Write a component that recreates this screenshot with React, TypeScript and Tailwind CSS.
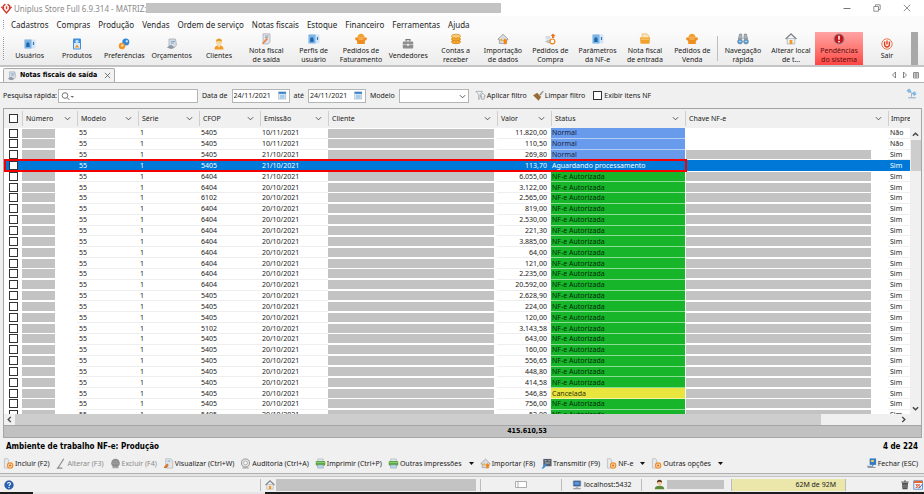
import type { ReactNode } from "react";
import clsx from "clsx";

type IconName =
  | "users"
  | "product"
  | "prefs"
  | "budget"
  | "client"
  | "note"
  | "basket"
  | "briefcase"
  | "coins"
  | "homeUp"
  | "purchase"
  | "folder"
  | "binoculars"
  | "home"
  | "alert"
  | "power"
  | "filter"
  | "broom"
  | "calendar"
  | "add"
  | "pencil"
  | "remove"
  | "view"
  | "audit"
  | "printer"
  | "transmit"
  | "close"
  | "satellite"
  | "help"
  | "computer"
  | "person"
  | "trash"
  | "agenda"
  | "logo";

const ICONS: Record<IconName, ReactNode> = {
  logo: (
    <g fill="none" stroke="#d9362f" strokeWidth="1.6">
      <path d="M4.800 1 2.600 3.200v3.600L6 10.800l3.400-4V3.200L7.200 1.400" />
      <path d="M6 3.600v3.200" strokeWidth="1.500" />
      <path d="M.4 4.200 2.400 6M11.600 4.200 9.600 6" />
    </g>
  ),
  users: (
    <g>
      <rect x="0.500" y="1.500" width="11" height="9" rx="0.800" fill="#d3e6f7" />
      <rect x="0.500" y="1.500" width="7" height="9" fill="#7db4e4" />
      <path d="M2.200 9V6a1.700 1.700 0 0 1 3.400 0v3z" fill="#1f66ae" />
      <path d="M9.500 4v3" stroke="#3c78b4" strokeWidth="1.200" />
    </g>
  ),
  product: (
    <g>
      <rect x="2" y="0.5" width="8" height="11" rx="1" fill="#3f8fdc" />
      <rect x="3" y="5" width="6" height="5.5" fill="#d9ecfb" />
      <circle cx="6" cy="3.400" r="1.700" fill="#bfe0f8" />
      <path d="M3.600 9.600 6 6.400l2.400 3.200z" fill="#f0942a" />
    </g>
  ),
  prefs: (
    <g>
      <circle cx="7.8" cy="4" r="3.5" fill="#2f86dc" />
      <circle cx="8.8" cy="3.2" r="1.2" fill="#b8dcf7" />
      <circle cx="4" cy="8" r="3.2" fill="#f39325" />
      <circle cx="4.2" cy="7.4" r="1.200" fill="#fde3bd" />
    </g>
  ),
  budget: (
    <g>
      <path d="M3 1h6.5l1 6L8 10H3z" fill="#d8dde2" stroke="#929aa3" strokeWidth="0.6" />
      <path d="M5 3.4h4M5 5h3" stroke="#5b9bd5" strokeWidth="0.8" />
      <path d="M0.8 9.4 5 6.8l3.4 2.4-3 1.8z" fill="#8d98a4" />
    </g>
  ),
  client: (
    <g>
      <path d="M1.4 11.4c0-3 2-4.2 4.6-4.2s4.6 1.200 4.600 4.200z" fill="#f39c24" />
      <path d="M4.800 7.400 6 9.600l1.200-2.200z" fill="#fff" />
      <circle cx="6" cy="4" r="3" fill="#f8d7a4" />
      <path d="M3 3.800C3 1.600 4.400.6 6 .6s3 1 3 3.200C7.600 3 5 2.600 3 3.800z" fill="#e4a023" />
    </g>
  ),
  note: (
    <g>
      <path d="M3 .8h7v8.400L8 11H3z" fill="#dfe2e6" stroke="#9aa0a8" strokeWidth="0.6" />
      <path d="M5 3h3.500M5 4.600h3" stroke="#7d8894" strokeWidth="0.7" />
      <path d="M2 10.500 6.500 5l1.400 1.200-4.600 4.800z" fill="#e8823a" />
    </g>
  ),
  basket: (
    <g>
      <path d="M2.200 4.600C3 1.800 4.500.8 6 .8s3 1 3.800 3.800z" fill="#f2a02c" />
      <path d="M.2 4.400h11.600v2L9.800 8v3H2.200V8L.2 6.400z" fill="#ef8d1f" />
      <path d="M3.400 6h5.200" stroke="#fbd08b" strokeWidth="0.900" />
    </g>
  ),
  briefcase: (
    <g>
      <path d="M4 3.600V1.600h4v2" fill="none" stroke="#777" strokeWidth="1.1" />
      <rect x="0.800" y="3.600" width="10.400" height="7" rx="0.800" fill="#8e8e8e" />
      <path d="M.8 6.600h10.400" stroke="#c9c9c9" strokeWidth="0.900" />
      <rect x="5" y="5.800" width="2" height="2" fill="#e7e7e7" />
    </g>
  ),
  coins: (
    <g fill="#f4a62a" stroke="#c6751a" strokeWidth="0.600">
      <ellipse cx="6" cy="8.800" rx="4.600" ry="2" />
      <ellipse cx="6" cy="6" rx="4.600" ry="2" />
      <ellipse cx="6" cy="3.200" rx="4.600" ry="2" fill="#fbcf6c" />
    </g>
  ),
  homeUp: (
    <g>
      <path d="M1 6 6 1.200 11 6v.6H9.600V10.500H2.400V6.600H1z" fill="#dadde0" stroke="#8b9096" strokeWidth="0.700" />
      <path d="M8 5.400 10.800 8.300H9.400v3H6.800v-3H5.400z" fill="#f08519" />
      <circle cx="4.400" cy="7" r="1.300" fill="#f3b13a" />
    </g>
  ),
  purchase: (
    <g>
      <path d="M.8 8.500 5 6.500l3 2-3 2z" fill="#b9c0c8" />
      <path d="M1.500 3h5v3.500h-5z" fill="#d8dde2" />
      <path d="M9 .6 11.600 3H10.200v2H8V3H6.600z" fill="#e8742c" />
      <circle cx="8.400" cy="8.400" r="2.400" fill="#fff" stroke="#f08519" strokeWidth="1.200" />
    </g>
  ),
  folder: (
    <g>
      <path d="M3 .8h5l2 2v4H3z" fill="#fbe3b4" stroke="#dba24c" strokeWidth="0.500" />
      <path d="M.8 4.600h10.400l-.8 6.200H1.600z" fill="#f2a02c" />
      <path d="M1.500 6.200h9" stroke="#fbd08b" strokeWidth="0.900" />
    </g>
  ),
  binoculars: (
    <g>
      <path d="M2.600 1h2l.6 5H1.400zM7.400 1h2l1.200 5H6.800z" fill="#aeb5bd" stroke="#6e7883" strokeWidth="0.600" />
      <circle cx="3" cy="8.600" r="2.400" fill="#4f9de0" stroke="#777f88" strokeWidth="0.700" />
      <circle cx="9" cy="8.600" r="2.400" fill="#4f9de0" stroke="#777f88" strokeWidth="0.700" />
      <path d="M1.800 8.400h2.400M7.800 8.400h2.400" stroke="#cfe8fb" strokeWidth="0.900" />
    </g>
  ),
  home: (
    <g>
      <path d="M2.200 5.500h7.600v5.500H2.200z" fill="#eceef0" stroke="#9a9fa5" strokeWidth="0.600" />
      <path d="M.6 6 6 1l5.400 5" fill="none" stroke="#7f868e" strokeWidth="1.300" />
      <path d="M4.600 11V7h2.800v4z" fill="#f39a1f" />
    </g>
  ),
  alert: (
    <g>
      <circle cx="6" cy="6" r="5" fill="#c5161d" stroke="#8d8d8d" strokeWidth="0.900" />
      <path d="M6 2.800v3.900" stroke="#fff" strokeWidth="1.500" />
      <circle cx="6" cy="8.600" r="0.900" fill="#fff" />
    </g>
  ),
  power: (
    <g fill="none" stroke="#e2401f" strokeWidth="1.400">
      <circle cx="6" cy="6" r="5.200" stroke="#ea7a55" strokeWidth="1" />
      <path d="M3.600 3.400v3.200a2.400 2.400 0 0 0 4.800 0V3.400M6 2.400v4" />
    </g>
  ),
  filter: (
    <g>
      <path d="M1 1.500h7L5.600 5v4L4 10.400V5z" fill="#eef1f3" stroke="#8d959d" strokeWidth="0.700" />
      <path d="M8.600 3.500 11.400 6.600H10V10H7.200V6.600H6z" fill="#f4f6f8" stroke="#7d868f" strokeWidth="0.700" />
    </g>
  ),
  broom: (
    <g>
      <path d="M7 5 10.800.8l.8.8L8.200 6z" fill="#8a8a8a" />
      <path d="M4.600 3 9 7.600 6 11.600 0 5.600z" fill="#a9793d" />
      <path d="M1.800 5.600 6.400 10M3.400 4.400l4.200 4" stroke="#5a4330" strokeWidth="0.700" />
    </g>
  ),
  calendar: (
    <g>
      <rect x="1" y="1.200" width="9.500" height="9.500" fill="#d9e9f7" stroke="#8ba0b5" strokeWidth="0.600" />
      <path d="M1 1.200h9.500v2.600H1z" fill="#3b82c8" />
      <path d="M2.600 5.800h6.200M2.600 7.500h6.200M2.600 9.200h6.200" stroke="#6fa3d2" strokeWidth="0.700" />
    </g>
  ),
  add: (
    <g>
      <path d="M1.500 .8h3.500l1.200 1.400V11H1.500z" fill="#e6e9ec" stroke="#a3a8ae" strokeWidth="0.600" />
      <circle cx="7.800" cy="8.200" r="2.900" fill="#fbe0bf" stroke="#ee8d2b" strokeWidth="1.200" />
      <path d="M7.800 6.800v2.800M6.400 8.200h2.800" stroke="#d8670f" strokeWidth="0.900" />
    </g>
  ),
  pencil: <path d="M8.500.8 3 9.500 1.800 11H7" fill="none" stroke="#8d8d8d" strokeWidth="1.300" />,
  remove: (
    <g>
      <circle cx="6" cy="5.600" r="4.700" fill="#8f8f8f" />
      <path d="M2.600 9.600h6.800v1.600H2.600z" fill="#a9a9a9" />
      <path d="M3 4h6M2.400 6h7.200" stroke="#a6a6a6" strokeWidth="0.600" />
    </g>
  ),
  view: (
    <g>
      <path d="M3 .8h5.400l2.200 2V11H3z" fill="#e3e6e9" stroke="#9da3aa" strokeWidth="0.600" />
      <path d="M1 9.800 4.500 6l1.800 1.600L4 11H1z" fill="#d7732f" />
      <path d="M5 3.400h3" stroke="#5b9bd5" strokeWidth="0.900" />
    </g>
  ),
  audit: (
    <g>
      <circle cx="6" cy="5.400" r="4.400" fill="#e2e2e2" stroke="#8d8d8d" strokeWidth="0.900" />
      <circle cx="6" cy="5.400" r="2" fill="#fff" stroke="#9b9b9b" strokeWidth="0.800" />
      <path d="M2.600 10.800h6.800" stroke="#8d8d8d" strokeWidth="1" />
    </g>
  ),
  printer: (
    <g>
      <path d="M3 1h6v3H3z" fill="#dfe6ea" stroke="#94a0a8" strokeWidth="0.500" />
      <rect x="0.800" y="3.400" width="10.400" height="5" rx="1.200" fill="#5aa544" />
      <path d="M1.500 5h9" stroke="#9dd58a" strokeWidth="0.900" />
      <path d="M2.800 7.500h6.400v3.500H2.800z" fill="#b9d5e8" stroke="#7f98a8" strokeWidth="0.500" />
    </g>
  ),
  transmit: (
    <g>
      <rect x="2.500" y="1" width="9" height="8" fill="#55606b" />
      <path d="M4 3h2M8 3h2M4.500 5.500h5" stroke="#c5ccd3" strokeWidth="0.900" />
      <path d="M.4 11.400 4.500 6.400l1.800 1.300L3 11.400z" fill="#3f8fdc" />
    </g>
  ),
  close: (
    <g>
      <rect x="4" y="0.500" width="7" height="7" fill="#3479c6" />
      <path d="M5.600 2.200h3v2.200h-3z" fill="#f6d04a" />
      <path d="M1 8.500h5l2 1.400h2.500V11H2z" fill="#8f9aa5" />
      <path d="M7.400 7v2.400" stroke="#3479c6" strokeWidth="1.200" />
    </g>
  ),
  satellite: (
    <g>
      <path d="m.6 2.400 3-1.800 2.400 3-3 2.200z" fill="#7fbaea" />
      <path d="m6.600 5.400 3-1.800 2 3.200-3 1.800z" fill="#7fbaea" />
      <path d="m4 4 4.500 3M6 6v3.500" stroke="#9aa7b3" strokeWidth="1" />
      <path d="M2.500 10.600h8" stroke="#a9bccf" strokeWidth="1.600" />
    </g>
  ),
  help: (
    <g>
      <circle cx="6" cy="6" r="5.200" fill="#2a62b8" stroke="#17407f" strokeWidth="0.600" />
      <path d="M4.200 4.600C4.300 2.500 7.800 2.600 7.700 4.600 7.600 5.800 6 5.900 6 7.200" fill="none" stroke="#fff" strokeWidth="1.300" />
      <circle cx="6" cy="9" r="0.800" fill="#fff" />
    </g>
  ),
  computer: (
    <g>
      <rect x="1.500" y="1" width="9" height="6.500" rx="0.600" fill="#315f9c" stroke="#8d98a4" strokeWidth="0.700" />
      <path d="M3 2.400h6v3.400H3z" fill="#5c97dc" />
      <path d="M4.500 8h3v1.400h-3zM1.500 9.600h9v1.400h-9z" fill="#9aa3ad" />
    </g>
  ),
  person: (
    <g>
      <path d="M.8 11.200C.8 8.400 3 7.400 6 7.400s5.200 1 5.200 3.800z" fill="#5c8a34" />
      <circle cx="6" cy="4.200" r="2.700" fill="#f0c89a" />
      <path d="M3.200 4C3 1.800 4.400.8 6 .8s3 1 2.800 3.200C7.600 2.800 4.800 2.600 3.200 4z" fill="#5b3a1c" />
    </g>
  ),
  trash: (
    <g>
      <path d="M2.400 3.600h7.200L9 11.200H3z" fill="#4d4d4d" />
      <path d="M1.600 2.500h8.800M4.800 1.300h2.400" stroke="#4d4d4d" strokeWidth="1.200" />
      <path d="M4.800 5v4.800M7.200 5v4.800" stroke="#bbb" strokeWidth="0.700" />
    </g>
  ),
  agenda: (
    <g>
      <rect x="1" y="1" width="10.500" height="10" fill="#f3f6fa" stroke="#3479c6" strokeWidth="0.900" />
      <path d="M1 1h10.500v2.600H1z" fill="#e8662b" />
      <path d="M3 5.500h2.400L3.800 7h1.400v2H3M8.500 5.500h-2v1.600h2V9h-2" fill="none" stroke="#e2401f" strokeWidth="0.900" />
      <path d="m7 10 4.500-5" stroke="#3479c6" strokeWidth="1.100" />
    </g>
  ),
};

function Icon({ name, className = "size-[10px]" }: { name: IconName; className?: string }) {
  return (
    <svg viewBox="0 0 12 12" className={clsx("shrink-0", className)} aria-hidden="true">
      {ICONS[name]}
    </svg>
  );
}

type Direction = "down" | "up" | "left" | "right";

const ARROWS: Record<Direction, string> = {
  down: "M1 2.500 4 5.500 7 2.500",
  up: "M1 5.500 4 2.500 7 5.500",
  left: "M5.500 1 2.500 4 5.500 7",
  right: "M2.500 1 5.500 4 2.500 7",
};

function Arrow({ to, bold = false }: { to: Direction; bold?: boolean }) {
  return (
    <svg viewBox="0 0 8 8" className="size-[7px] shrink-0" aria-hidden="true">
      <path d={ARROWS[to]} fill="none" stroke="#444" strokeWidth={bold ? 1.6 : 1} />
    </svg>
  );
}

const MENU = [
  "Cadastros",
  "Compras",
  "Produção",
  "Vendas",
  "Ordem de serviço",
  "Notas fiscais",
  "Estoque",
  "Financeiro",
  "Ferramentas",
  "Ajuda",
];

interface Tool {
  icon: IconName;
  lines: string[];
  danger?: boolean;
}

const TOOLS: Tool[] = [
  { icon: "users", lines: ["Usuários"] },
  { icon: "product", lines: ["Produtos"] },
  { icon: "prefs", lines: ["Preferências"] },
  { icon: "budget", lines: ["Orçamentos"] },
  { icon: "client", lines: ["Clientes"] },
  { icon: "note", lines: ["Nota fiscal", "de saída"] },
  { icon: "users", lines: ["Perfis de", "usuário"] },
  { icon: "basket", lines: ["Pedidos de", "Faturamento"] },
  { icon: "briefcase", lines: ["Vendedores"] },
  { icon: "coins", lines: ["Contas a", "receber"] },
  { icon: "homeUp", lines: ["Importação", "de dados"] },
  { icon: "purchase", lines: ["Pedidos de", "Compra"] },
  { icon: "users", lines: ["Parâmetros", "da NF-e"] },
  { icon: "folder", lines: ["Nota fiscal", "de entrada"] },
  { icon: "basket", lines: ["Pedidos de", "Venda"] },
];

const SYSTEM_TOOLS: Tool[] = [
  { icon: "binoculars", lines: ["Navegação", "rápida"] },
  { icon: "home", lines: ["Alterar local", "de t..."] },
  { icon: "alert", lines: ["Pendências", "do sistema"], danger: true },
  { icon: "power", lines: ["Sair"] },
];

type Status = "Normal" | "Aguardando processamento" | "NF-e Autorizada" | "Cancelada";

interface Invoice {
  cfop: string;
  date: string;
  value: string;
  status: Status;
  printed: string;
}

const nfe = (
  cfop: string,
  date: string,
  value: string,
  status: Status = "NF-e Autorizada",
  printed = "Sim",
): Invoice => ({ cfop, date, value, status, printed });

const INVOICES: Invoice[] = [
  nfe("5405", "10/11/2021", "11.820,00", "Normal", "Não"),
  nfe("5405", "10/11/2021", "110,50", "Normal", "Não"),
  nfe("5405", "21/10/2021", "269,80", "Normal"),
  nfe("5405", "21/10/2021", "113,70", "Aguardando processamento"),
  nfe("6404", "21/10/2021", "6.055,00"),
  nfe("6404", "20/10/2021", "3.122,00"),
  nfe("6102", "20/10/2021", "2.565,00"),
  nfe("6404", "20/10/2021", "819,00"),
  nfe("6404", "20/10/2021", "2.530,00"),
  nfe("6404", "20/10/2021", "221,30"),
  nfe("6404", "20/10/2021", "3.885,00"),
  nfe("6404", "20/10/2021", "64,00"),
  nfe("6404", "20/10/2021", "121,00"),
  nfe("6404", "20/10/2021", "2.235,00"),
  nfe("6404", "20/10/2021", "20.592,00"),
  nfe("5405", "20/10/2021", "2.628,90"),
  nfe("5405", "20/10/2021", "224,00"),
  nfe("5405", "20/10/2021", "120,00"),
  nfe("5102", "20/10/2021", "3.143,58"),
  nfe("5405", "20/10/2021", "643,00"),
  nfe("5405", "20/10/2021", "160,00"),
  nfe("5405", "20/10/2021", "556,65"),
  nfe("5405", "20/10/2021", "448,80"),
  nfe("5405", "20/10/2021", "414,58"),
  nfe("5405", "20/10/2021", "546,85", "Cancelada"),
  nfe("5405", "20/10/2021", "756,00"),
  nfe("5405", "20/10/2021", "52,00"),
];

const STATUS_STYLE: Record<Status, string> = {
  Normal: "bg-[#699bed] text-[#14233f] border-[#b4cdf6]",
  "Aguardando processamento": "text-white border-transparent",
  "NF-e Autorizada": "bg-[#17b52a] text-[#032a08] border-[#8bdc94]",
  Cancelada: "bg-[#e8e53e] text-[#33320a] border-[#f4f2a0]",
};

const COLUMNS = [
  { label: "Número", width: "w-[55px]" },
  { label: "Modelo", width: "w-[61px]" },
  { label: "Série", width: "w-[61px]" },
  { label: "CFOP", width: "w-[61px]" },
  { label: "Emissão", width: "w-[68px]" },
  { label: "Cliente", width: "" },
  { label: "Valor", width: "w-[54px]" },
  { label: "Status", width: "w-[134px]" },
  { label: "Chave NF-e", width: "w-[203px]" },
];

const CHECKBOX =
  "block size-[9px] shrink-0 appearance-none border border-[#333] bg-white checked:bg-[#0078d7]";

const HEAVY = "font-['DejaVu_Sans_Condensed','Noto_Sans',sans-serif] font-bold text-black";

function ToolButton({ tool, className }: { tool: Tool; className: string }) {
  return (
    <button
      type="button"
      className={clsx(
        "flex flex-col items-center justify-center gap-[1px] leading-[9px] whitespace-nowrap",
        tool.danger && "bg-linear-to-b from-[#ffa3a3] to-[#ff4343] text-[#5c0c0c]",
        className,
      )}
    >
      <Icon name={tool.icon} className="size-[12px]" />
      <span>
        {tool.lines.map((line) => (
          <span key={line} className="block">
            {line}
          </span>
        ))}
      </span>
    </button>
  );
}

function TitleBar() {
  return (
    <header className="flex h-[16px] items-center bg-white pl-[1px] text-[8px] text-[#8a8a8a]">
      <Icon name="logo" className="size-[11px]" />
      <h1 className="ml-[2px] whitespace-nowrap">Uniplus Store Full 6.9.314 - MATRIZ:</h1>
      <div className="h-[10px] w-[355px] bg-[#c3c3c3]" />
      <div className="ml-auto flex pr-[2px]">
        <button type="button" aria-label="Minimizar" className="flex w-[30px] justify-center">
          <svg viewBox="0 0 8 8" className="size-[8px]">
            <path d="M.5 4.500h7" stroke="#777" strokeWidth="1" />
          </svg>
        </button>
        <button type="button" aria-label="Restaurar" className="flex w-[30px] justify-center">
          <svg viewBox="0 0 8 8" className="size-[8px]">
            <path d="M.8 2.500h4.700v4.700H.8zM2.500 2.300V.8h4.700v4.700H5.700" fill="none" stroke="#777" strokeWidth="0.800" />
          </svg>
        </button>
        <button type="button" aria-label="Fechar janela" className="flex w-[30px] justify-center">
          <svg viewBox="0 0 8 8" className="size-[8px]">
            <path d="m.8.8 6.400 6.400M7.200.8.8 7.200" stroke="#777" strokeWidth="0.800" />
          </svg>
        </button>
      </div>
    </header>
  );
}

function MenuBar() {
  return (
    <nav className="flex h-[16px] items-center bg-[#fbfbfb] text-[8px] text-[#1e1e1e]">
      <div className="mr-[7px] ml-[3px] h-[9px] border-l border-dotted border-[#999]" />
      <ul className="flex gap-[8px]">
        {MENU.map((item) => (
          <li key={item}>
            <button type="button" className="whitespace-nowrap">
              {item}
            </button>
          </li>
        ))}
      </ul>
    </nav>
  );
}

function Toolbar() {
  return (
    <div className="flex h-[35px] border-b-2 border-[#c4c4c4] bg-linear-to-b from-[#fbfbfb] to-[#ececec] pr-[6px] pl-[3px]">
      <div className="my-[5px] mr-[2px] border-l border-dotted border-[#999]" />
      <div className="flex flex-1">
        {TOOLS.map((tool) => (
          <ToolButton key={tool.lines.join(" ")} tool={tool} className="min-w-0 flex-1" />
        ))}
      </div>
      <div className="mx-[1px] my-[4px] w-px bg-[#bdbdbd]" />
      {SYSTEM_TOOLS.map((tool) => (
        <ToolButton key={tool.lines.join(" ")} tool={tool} className="w-[48px]" />
      ))}
      <div className="w-[7px] bg-[#a8a8a8]" />
    </div>
  );
}

function TabStrip() {
  return (
    <div className="flex h-[15px] items-end bg-white pr-[4px] pl-[3px]">
      <div className="flex h-[14px] items-center rounded-t-[2px] border border-b-0 border-[#a9a9a9] bg-[#f2f2f2] pr-[3px] pl-[3px]">
        <Icon name="budget" />
        <span className={clsx("ml-[3px] text-[7px] whitespace-nowrap", HEAVY)}>
          Notas fiscais de saída
        </span>
        <button type="button" aria-label="Fechar aba" className="ml-[7px]">
          <svg viewBox="0 0 8 8" className="size-[7px]">
            <path d="m1 1 6 6M7 1 1 7" stroke="#555" strokeWidth="0.900" />
          </svg>
        </button>
      </div>
      <div className="mb-[3px] ml-auto flex gap-[3px]">
        <button type="button" aria-label="Aba anterior">
          <svg viewBox="0 0 8 8" className="size-[8px]">
            <path d="M5.500 1v6L2.500 4z" fill="none" stroke="#666" strokeWidth="0.800" />
          </svg>
        </button>
        <button type="button" aria-label="Próxima aba">
          <svg viewBox="0 0 8 8" className="size-[8px]">
            <path d="M2.500 1v6l3-3z" fill="none" stroke="#666" strokeWidth="0.800" />
          </svg>
        </button>
        <button type="button" aria-label="Lista de abas">
          <svg viewBox="0 0 8 8" className="size-[8px]">
            <path d="M1.500 1.500h5v5.500h-5zM4 1.500V7M1.500 3h5M1.500 5h5" fill="none" stroke="#777" strokeWidth="0.800" />
          </svg>
        </button>
      </div>
    </div>
  );
}

function DateField({ id, label }: { id: string; label: string }) {
  return (
    <>
      <label htmlFor={id}>{label}</label>
      <div className="flex h-[14px] w-[58px] items-center border border-[#b4b4b4] bg-white pr-[2px]">
        <input
          id={id}
          type="text"
          defaultValue="24/11/2021"
          className="w-full min-w-0 bg-transparent pl-[1px] outline-none"
        />
        <button type="button" aria-label="Abrir calendário">
          <Icon name="calendar" className="size-[9px]" />
        </button>
      </div>
    </>
  );
}

function FilterBar() {
  return (
    <form className="flex h-[25px] items-center pr-[5px] whitespace-nowrap">
      <label htmlFor="search">Pesquisa rápida:</label>
      <div className="ml-[1px] mr-[4px] flex h-[14px] w-[140px] items-center border border-[#b4b4b4] bg-white pl-[2px]">
        <svg viewBox="0 0 14 10" className="h-[10px] w-[14px] shrink-0" aria-hidden="true">
          <circle cx="4" cy="4.500" r="2.800" fill="none" stroke="#666" strokeWidth="0.900" />
          <path d="m6 6.500 2.400 2.400" stroke="#666" strokeWidth="1" />
          <path d="M9.500 5h3.500l-1.700 1.800z" fill="#666" />
        </svg>
        <input id="search" type="text" className="w-full min-w-0 bg-transparent outline-none" />
      </div>
      <div className="flex items-center gap-[4px]">
        <DateField id="date-from" label="Data de" />
        <DateField id="date-to" label="até" />
        <label htmlFor="model">Modelo</label>
        <div className="relative">
          <select
            id="model"
            className="block h-[14px] w-[70px] appearance-none border border-[#b4b4b4] bg-white"
          >
            <option></option>
          </select>
          <span className="pointer-events-none absolute top-[4px] right-[3px]">
            <Arrow to="down" />
          </span>
        </div>
      </div>
      <button type="button" className="ml-[6px] flex items-center gap-[1px]">
        <Icon name="filter" className="size-[11px]" />
        Aplicar filtro
      </button>
      <button type="button" className="ml-[6px] flex items-center gap-[1px]">
        <Icon name="broom" className="size-[11px]" />
        Limpar filtro
      </button>
      <label className="ml-[8px] flex items-center gap-[2px]">
        <input type="checkbox" className={CHECKBOX} />
        Exibir itens NF
      </label>
      <button type="button" aria-label="Conexão" className="mb-[4px] ml-auto">
        <Icon name="satellite" className="size-[11px]" />
      </button>
    </form>
  );
}

function InvoiceRow({ invoice, index }: { invoice: Invoice; index: number }) {
  const selected = invoice.status === "Aguardando processamento";
  const cell = clsx("border-b pl-[2px]", selected ? "border-[#0078d7]" : "border-[#eeeeee]");
  return (
    <tr className={clsx(selected ? "relative bg-[#0078d7] text-white" : "bg-white")}>
      <td className="pl-[5px]">
        <input type="checkbox" aria-label={`Selecionar nota ${index + 1}`} className={CHECKBOX} />
        {selected && (
          <span className="pointer-events-none absolute -inset-y-px right-[223px] left-0 border-2 border-[#f40000]" />
        )}
      </td>
      <td>{!selected && <div className="h-[9px] w-[33px] bg-[#c3c3c3]" />}</td>
      <td className={cell}>55</td>
      <td className={cell}>1</td>
      <td className={cell}>{invoice.cfop}</td>
      <td className={cell}>{invoice.date}</td>
      <td>{!selected && <div className="mr-[3px] h-[9px] bg-[#c3c3c3]" />}</td>
      <td className={clsx(cell, "pr-[4px] text-right")}>{invoice.value}</td>
      <td className={clsx("border-b pl-[1px]", STATUS_STYLE[invoice.status])}>{invoice.status}</td>
      <td>
        {index > 1 && !selected && <div className="ml-[1px] h-[9px] w-[185px] bg-[#c3c3c3]" />}
      </td>
      <td className={cell}>{invoice.printed}</td>
    </tr>
  );
}

function InvoiceTable() {
  return (
    <section className="flex min-h-0 flex-1 flex-col border border-[#a5a5a5] bg-[#f0f0f0]">
      <div className="flex min-h-0 flex-1">
        <div className="min-w-0 flex-1 overflow-hidden">
          <table className="h-[312px] w-full table-fixed border-collapse leading-[9px] whitespace-nowrap">
            <colgroup>
              <col className="w-[18px]" />
              {COLUMNS.map((column) => (
                <col key={column.label} className={column.width} />
              ))}
              <col className="w-[22px]" />
            </colgroup>
            <thead>
              <tr className="h-[19px] bg-[#f0f0f0] text-left">
                <th className="pl-[5px]">
                  <input type="checkbox" aria-label="Selecionar todas" className={CHECKBOX} />
                </th>
                {COLUMNS.map((column) => (
                  <th key={column.label} className="p-0 font-normal">
                    <button
                      type="button"
                      className="flex h-[15px] w-full items-center justify-between border-l border-[#cfcfcf] pr-[6px] pl-[3px]"
                    >
                      {column.label}
                      <Arrow to="down" />
                    </button>
                  </th>
                ))}
                <th className="p-0 font-normal">
                  <span className="flex h-[15px] items-center border-l border-[#cfcfcf] pl-[2px]">Impre</span>
                </th>
              </tr>
            </thead>
            <tbody>
              {INVOICES.map((invoice, index) => (
                <InvoiceRow key={invoice.value} invoice={invoice} index={index} />
              ))}
            </tbody>
          </table>
        </div>
        <div className="mt-[19px] flex w-[11px] flex-col items-center">
          <button type="button" aria-label="Rolar para cima" className="flex h-[12px] items-center">
            <Arrow to="up" bold />
          </button>
          <div className="h-[31px] w-[10px] bg-[#cdcdcd]" />
          <button type="button" aria-label="Rolar para baixo" className="mt-auto flex h-[12px] items-center">
            <Arrow to="down" bold />
          </button>
        </div>
      </div>
      <div className="flex h-[11px] items-center pr-[11px]">
        <button type="button" aria-label="Rolar para a esquerda" className="flex w-[11px] justify-center">
          <Arrow to="left" bold />
        </button>
        <div className="h-full w-[89%] bg-[#cdcdcd]" />
        <button type="button" aria-label="Rolar para a direita" className="ml-auto flex w-[14px] justify-center">
          <Arrow to="right" bold />
        </button>
      </div>
      <div
        className={clsx(
          "flex h-[12px] items-center justify-end border-t border-[#a5a5a5] bg-[#c1c1c1] pr-[374px] text-[7px]",
          HEAVY,
        )}
      >
        415.610,53
      </div>
    </section>
  );
}

interface Action {
  icon: IconName;
  label: string;
  disabled?: boolean;
  menu?: boolean;
}

const ACTIONS: Action[] = [
  { icon: "add", label: "Incluir (F2)" },
  { icon: "pencil", label: "Alterar (F3)", disabled: true },
  { icon: "remove", label: "Excluir (F4)", disabled: true },
  { icon: "view", label: "Visualizar (Ctrl+W)" },
  { icon: "audit", label: "Auditoria (Ctrl+A)" },
  { icon: "printer", label: "Imprimir (Ctrl+P)" },
  { icon: "printer", label: "Outras impressões", menu: true },
  { icon: "homeUp", label: "Importar (F8)" },
  { icon: "transmit", label: "Transmitir (F9)" },
  { icon: "add", label: "NF-e", menu: true },
  { icon: "add", label: "Outras opções", menu: true },
];

function ActionBar() {
  return (
    <div className="flex h-[19px] items-center gap-[6px] pr-[4px] whitespace-nowrap">
      {ACTIONS.map((action) => (
        <button
          key={action.label}
          type="button"
          disabled={action.disabled}
          className="flex items-center gap-[1px] disabled:text-[#8a8a8a]"
        >
          <Icon name={action.icon} className="size-[11px]" />
          {action.label}
          {action.menu && (
            <svg viewBox="0 0 5 3" className="ml-[6px] h-[3px] w-[5px]" aria-hidden="true">
              <path d="M0 0h5L2.500 3z" fill="#111" />
            </svg>
          )}
        </button>
      ))}
      <button type="button" className="ml-auto flex items-center gap-[1px]">
        <Icon name="close" className="size-[11px]" />
        Fechar (ESC)
      </button>
    </div>
  );
}

function StatusBar() {
  return (
    <footer className="flex h-[16px] shrink-0 items-center border-t border-[#c4c4c4] bg-[#f0f0f0] pr-px pl-[4px] whitespace-nowrap">
      <button type="button" aria-label="Ajuda">
        <Icon name="help" />
      </button>
      <div className="ml-[246px] flex h-[12px] flex-1 items-center border-l border-[#bbb] pl-[4px]">
        <Icon name="home" />
        <div className="mr-[4px] ml-[1px] h-full flex-1 bg-[#c3c3c3]" />
      </div>
      <div className="flex h-[12px] w-[81px] items-center justify-center border-l border-[#bbb]">
        <svg viewBox="0 0 12 7" className="h-[7px] w-[12px]" aria-hidden="true">
          <path d="M.5.500h11v6H.5zM3 .5v6" fill="#fff" stroke="#999" strokeWidth="0.800" />
        </svg>
      </div>
      <div className="flex h-[12px] w-[80px] items-center gap-[2px] border-l border-[#bbb] pl-[10px]">
        <Icon name="computer" />
        localhost:5432
      </div>
      <div className="flex h-[12px] w-[90px] items-center gap-[2px] border-l border-[#bbb] pl-[12px]">
        <Icon name="person" className="size-[11px]" />
        <div className="h-[9px] w-[57px] bg-[#c3c3c3]" />
      </div>
      <div className="flex h-[12px] w-[115px] items-center justify-end border-x border-[#bbb] bg-[#ebe7ab] pr-[9px]">
        62M de 92M
      </div>
      <div className="ml-[54px] flex items-center gap-[3px]">
        <button type="button" aria-label="Limpar memória">
          <Icon name="trash" />
        </button>
        <button type="button" aria-label="Agenda">
          <Icon name="agenda" />
        </button>
      </div>
    </footer>
  );
}

export default function App() {
  return (
    <div className="flex h-screen flex-col overflow-hidden bg-[#e3e3e3] font-['Noto_Sans','Open_Sans',sans-serif] text-[7px] leading-[9px] text-[#1a1a1a]">
      <TitleBar />
      <MenuBar />
      <Toolbar />
      <TabStrip />
      <main className="mb-[2px] flex min-h-0 flex-1 flex-col border-t border-b border-[#b0b0b0] bg-[#f0f0f0] pr-[2px] pl-[3px]">
        <FilterBar />
        <InvoiceTable />
        <div className={clsx("flex h-[16px] items-center justify-between pr-[4px] pl-[3px] text-[8px]", HEAVY)}>
          <span>Ambiente de trabalho NF-e: Produção</span>
          <span>4 de 224</span>
        </div>
        <ActionBar />
      </main>
      <StatusBar />
      <div className="flex h-[2px] shrink-0 bg-[#1c1c1c]">
        <div className="ml-[33px] w-[232px] bg-[#e6e6e6]" />
      </div>
    </div>
  );
}
